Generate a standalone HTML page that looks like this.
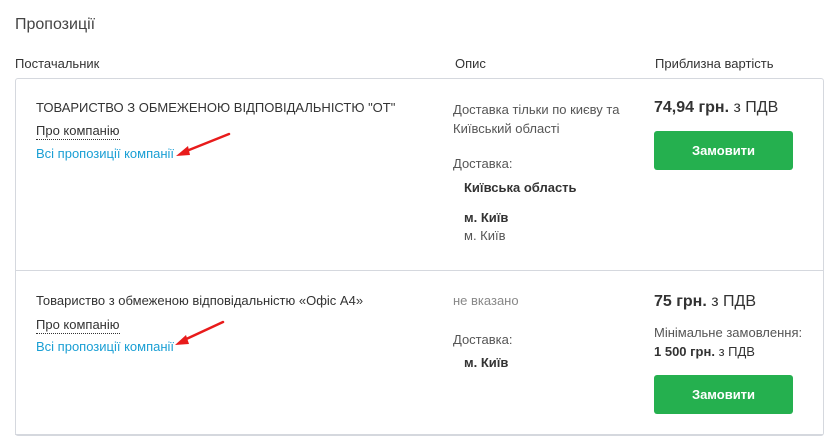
<!DOCTYPE html>
<html><head><meta charset="utf-8"><style>
body{margin:0;width:838px;height:437px;background:#fff;font-family:"Liberation Sans",sans-serif;color:#333;position:relative;overflow:hidden;font-size:13px}
.a{position:absolute;white-space:nowrap}
.h{color:#333;font-size:13px}
.box{position:absolute;left:15px;top:78px;width:807px;height:356px;border:1px solid #d5d8de;border-radius:3px}
.div{position:absolute;left:15px;top:270px;width:808px;height:1px;background:#d5d8de}
.bot{position:absolute;left:15px;top:434px;width:808px;height:1px;background:#d5d8de}
.lnk{color:#1a9fd4}
.dot{border-bottom:1px dotted #333;padding-bottom:1px}
.btn{position:absolute;width:139px;height:39px;background:#25b04f;border-radius:3px;color:#fff;font-weight:bold;font-size:13px;text-align:center;line-height:39px}
.g{color:#555}
</style></head><body>
<div class="a" style="left:15px;top:16px;font-size:16px;color:#444">Пропозиції</div>
<div class="a h" style="left:15px;top:56px">Постачальник</div>
<div class="a h" style="left:455px;top:56px">Опис</div>
<div class="a h" style="left:655px;top:56px">Приблизна вартість</div>
<div class="box"></div><div class="div"></div><div class="bot"></div>

<div class="a" style="left:36px;top:100px">ТОВАРИСТВО З ОБМЕЖЕНОЮ ВІДПОВІДАЛЬНІСТЮ "ОТ"</div>
<div class="a" style="left:36px;top:123px"><span class="dot">Про компанію</span></div>
<div class="a lnk" style="left:36px;top:146px">Всі пропозиції компанії</div>
<div class="a g" style="left:453px;top:100px;line-height:19px">Доставка тільки по києву та<br>Київський області</div>
<div class="a g" style="left:453px;top:156px">Доставка:</div>
<div class="a" style="left:464px;top:180px;font-weight:bold">Київська область</div>
<div class="a" style="left:464px;top:210px;font-weight:bold">м. Київ</div>
<div class="a g" style="left:464px;top:228px">м. Київ</div>
<div class="a" style="left:654px;top:99px;font-size:16px"><b>74,94 грн.</b> з ПДВ</div>
<div class="btn" style="left:654px;top:131px">Замовити</div>

<div class="a" style="left:36px;top:293px">Товариство з обмеженою відповідальністю «Офіс А4»</div>
<div class="a" style="left:36px;top:317px"><span class="dot">Про компанію</span></div>
<div class="a lnk" style="left:36px;top:339px">Всі пропозиції компанії</div>
<div class="a" style="left:453px;top:293px;color:#888">не вказано</div>
<div class="a g" style="left:453px;top:332px">Доставка:</div>
<div class="a" style="left:464px;top:355px;font-weight:bold">м. Київ</div>
<div class="a" style="left:654px;top:293px;font-size:16px"><b>75 грн.</b> з ПДВ</div>
<div class="a g" style="left:654px;top:325px">Мінімальне замовлення:</div>
<div class="a" style="left:654px;top:344px"><b>1 500 грн.</b> з ПДВ</div>
<div class="btn" style="left:654px;top:375px">Замовити</div>

<svg class="a" style="left:0;top:0" width="838" height="437">
<g stroke="#e81b1b" stroke-width="2.5" stroke-linecap="round"><line x1="229" y1="134" x2="184" y2="152"/><line x1="223" y1="322" x2="182" y2="341"/></g>
<g fill="#e81b1b"><polygon points="176,156 188,146 190,155"/><polygon points="175,345 186,335 189,344"/></g>
</svg>
</body></html>
